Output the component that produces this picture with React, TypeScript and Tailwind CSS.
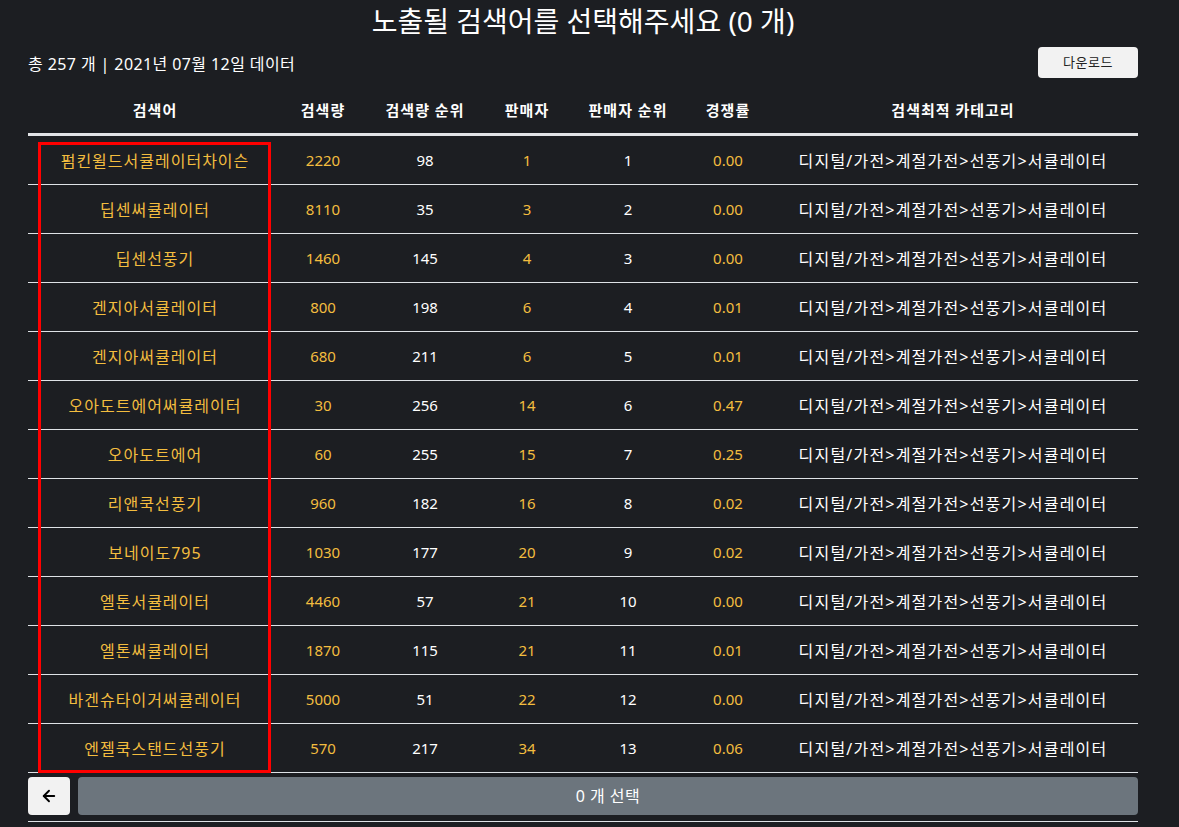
import { ArrowLeft } from "lucide-react";

const rows = [
  ["펌킨윌드서큘레이터차이슨", "2220", "98", "1", "1", "0.00"],
  ["딥센써큘레이터", "8110", "35", "3", "2", "0.00"],
  ["딥센선풍기", "1460", "145", "4", "3", "0.00"],
  ["겐지아서큘레이터", "800", "198", "6", "4", "0.01"],
  ["겐지아써큘레이터", "680", "211", "6", "5", "0.01"],
  ["오아도트에어써큘레이터", "30", "256", "14", "6", "0.47"],
  ["오아도트에어", "60", "255", "15", "7", "0.25"],
  ["리앤쿡선풍기", "960", "182", "16", "8", "0.02"],
  ["보네이도795", "1030", "177", "20", "9", "0.02"],
  ["엘톤서큘레이터", "4460", "57", "21", "10", "0.00"],
  ["엘톤써큘레이터", "1870", "115", "21", "11", "0.01"],
  ["바겐슈타이거써큘레이터", "5000", "51", "22", "12", "0.00"],
  ["엔젤쿡스탠드선풍기", "570", "217", "34", "13", "0.06"],
];

const category = "디지털/가전>계절가전>선풍기>서큘레이터";

export default function App() {
  return (
    <div
      className="min-h-[827px] bg-[#1c1e22] text-white"
      style={{ fontFamily: '"Noto Sans", "Noto Sans CJK KR", sans-serif' }}
    >
      <div className="ml-[28px] w-[1110px] pt-[2px]">
        <h1 className="text-center text-[28px] leading-[38px]">
          노출될 검색어를 선택해주세요 (0 개)
        </h1>

        <div className="mt-[7px] flex items-center justify-between">
          <p className="text-[16px] pt-[2px] tracking-[0.4px]">총 257 개 | 2021년 07월 12일 데이터</p>
          <button className="h-[31px] w-[100px] rounded-[4px] bg-[#f2f2f2] text-[13px] text-[#222] tracking-[0.5px]">
            다운로드
          </button>
        </div>

        <div className="relative mt-[9px]">
          <div className="grid grid-cols-[254px_82px_122px_82px_120px_80px_370px] border-b-[3px] border-[#e2e4e7] h-[49px] items-center text-center text-[15px] font-bold tracking-[1px]">
            <div>검색어</div>
            <div>검색량</div>
            <div>검색량 순위</div>
            <div>판매자</div>
            <div>판매자 순위</div>
            <div>경쟁률</div>
            <div>검색최적 카테고리</div>
          </div>

          {rows.map((r) => (
            <div
              key={r[0]}
              className="grid grid-cols-[254px_82px_122px_82px_120px_80px_370px] border-b border-[#dee2e6] h-[49px] items-center text-center text-[15px] pt-[1px]"
            >
              <div className="text-[#f3bd3f] text-[16px] tracking-[1px]">{r[0]}</div>
              <div className="text-[#f3bd3f]">{r[1]}</div>
              <div>{r[2]}</div>
              <div className="text-[#f3bd3f]">{r[3]}</div>
              <div>{r[4]}</div>
              <div className="text-[#f3bd3f]">{r[5]}</div>
              <div className="text-[16px] tracking-[1.2px]">{category}</div>
            </div>
          ))}

          <div className="absolute left-[10px] top-[55px] h-[631px] w-[233px] border-[3px] border-[#ff0000]" />
        </div>

        <div className="mt-[4px] flex gap-[8px] border-b border-[#dee2e6] pb-[6px]">
          <button className="flex h-[38px] w-[42px] items-center justify-center rounded-[4px] bg-[#f2f2f2] text-black">
            <ArrowLeft size={18} strokeWidth={2.5} />
          </button>
          <div className="flex h-[38px] flex-1 items-center justify-center rounded-[4px] bg-[#6c757d] text-[16px] tracking-[0.5px]">
            0 개 선택
          </div>
        </div>
      </div>
    </div>
  );
}
